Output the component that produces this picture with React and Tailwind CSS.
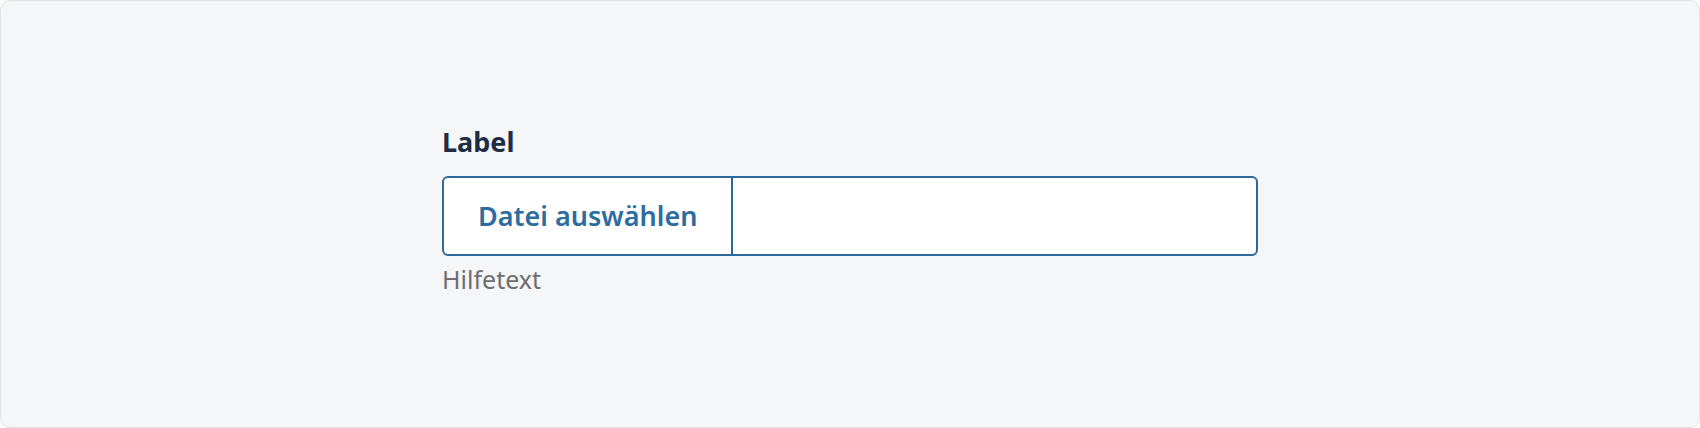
import React from "react";

export default function App() {
  return (
    <div className="w-[1700px] h-[428px] bg-white">
      <div className="w-full h-full flex justify-center items-start pt-[121px] rounded-[10px] border border-[#dfe2e7] bg-[#f5f6f8] font-['Noto_Sans',sans-serif]">
        {/* Datei-Upload Feld */}
        <div className="w-[816px] flex flex-col">
          <label className="text-[27px] leading-[40px] font-bold text-[#1d2d43] mb-[14px]" htmlFor="datei">
            Label
          </label>
          <div className="flex h-[80px] rounded-[6px] border-2 border-[#2b6a9b] bg-white overflow-hidden">
            <button
              type="button"
              className="h-full px-[34px] border-r-2 border-[#2b6a9b] text-[27px] font-semibold text-[#2c6c9f]"
            >
              Datei auswählen
            </button>
            <div className="flex-1" />
          </div>
          <span className="mt-[5px] text-[25px] leading-[36px] text-[#6e6e6e]">Hilfetext</span>
        </div>
      </div>
    </div>
  );
}
